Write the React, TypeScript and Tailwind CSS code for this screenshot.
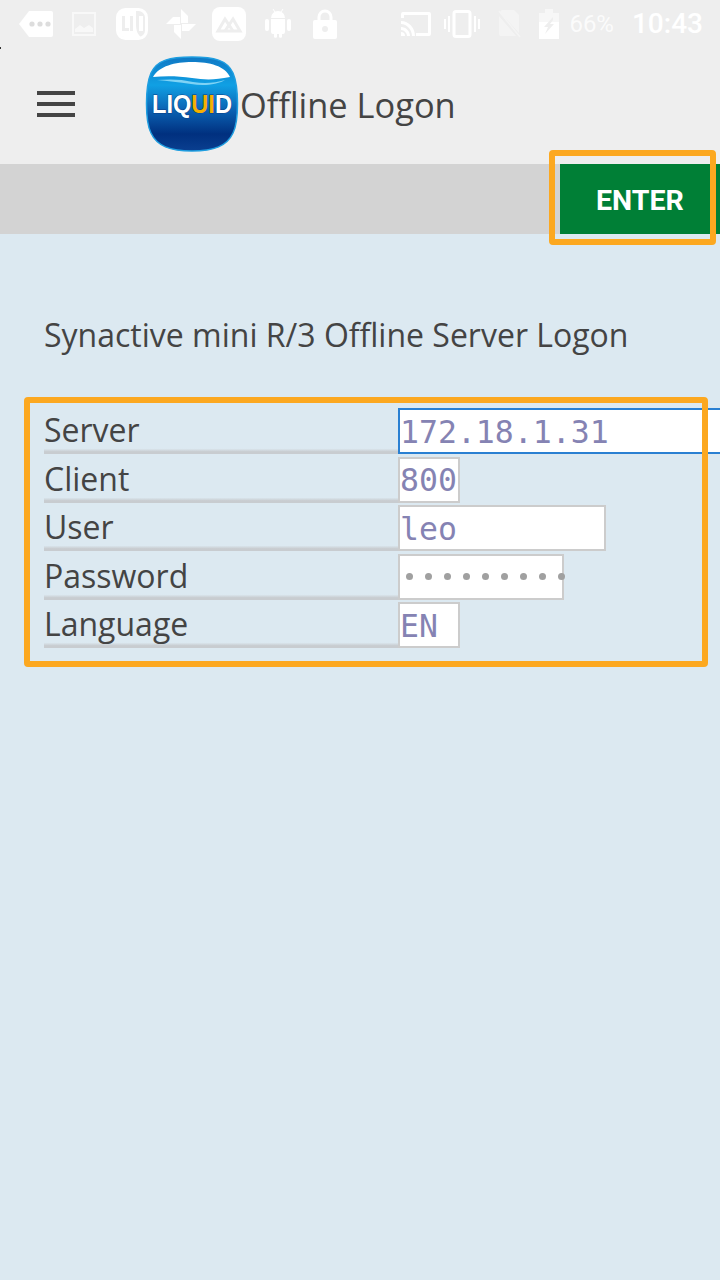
const W = "#ffffff";
const G = "#eeeeee";

function TagIcon() {
  return (
    <svg width="34" height="26" viewBox="0 0 34 26" className="ml-[19px]">
      <path d="M10 0h22a2 2 0 0 1 2 2v22a2 2 0 0 1-2 2H10L0 13z" fill={W} />
      <circle cx="13" cy="13" r="2.600" fill="#dddddd" />
      <circle cx="21" cy="13" r="2.600" fill="#dddddd" />
      <circle cx="29" cy="13" r="2.600" fill="#dddddd" />
    </svg>
  );
}
function ImageIcon() {
  return (
    <svg width="24" height="24" viewBox="0 0 24 24" className="ml-[19px]" opacity="0.6">
      <rect x="1" y="1" width="22" height="22" fill="none" stroke={W} strokeWidth="2" />
      <path d="M3 20v-3l5-4 4 3 5-3 4 3v4z" fill={W} />
    </svg>
  );
}
function LuiIcon() {
  return (
    <svg width="32" height="32" viewBox="0 0 32 32" className="ml-[20px]">
      <rect x="1.500" y="1.500" width="29" height="29" rx="8" fill="none" stroke={W} strokeWidth="3" />
      <path d="M3 6a3 3 0 0 1 3-3h14v13c0 7 2 11 5 13H8a5 5 0 0 1-5-5z" fill={W} />
      <path d="M6 8h3v12h4v3H6zM14 8h3v15h-3z" fill={G} />
      <path d="M23 8h4v15h-4z" fill={W} />
    </svg>
  );
}
function PinwheelIcon() {
  return (
    <svg width="30" height="30" viewBox="0 0 30 30" className="ml-[18px]">
      <path d="M15 14V0l7 7v7zM16 15h14l-7 7h-7zM15 16v14l-7-7v-7zM14 15H0l7-7h7z" fill={W} />
    </svg>
  );
}
function MountainIcon() {
  return (
    <svg width="34" height="34" viewBox="0 0 34 34" className="ml-[16px]">
      <rect width="34" height="34" rx="8" fill={W} />
      <path d="M6 24l7-12 4 6 4-6 7 12z" fill="none" stroke={G} strokeWidth="3" />
      <path d="M13 24l4-6 4 6" fill="none" stroke={G} strokeWidth="3" />
    </svg>
  );
}
function AndroidIcon() {
  return (
    <svg width="26" height="30" viewBox="0 0 26 30" className="ml-[19px]">
      <path d="M6 9a7 7 0 0 1 14 0zM6 10h14v13a2 2 0 0 1-2 2h-1v3a2 2 0 0 1-3 0v-3h-2v3a2 2 0 0 1-3 0v-3H8a2 2 0 0 1-2-2z" fill={W} />
      <path d="M8 0l2 3M18 0l-2 3" stroke={W} strokeWidth="1" />
      <rect x="0" y="10" width="4" height="12" rx="2" fill={W} />
      <rect x="22" y="10" width="4" height="12" rx="2" fill={W} />
    </svg>
  );
}
function LockIcon() {
  return (
    <svg width="24" height="30" viewBox="0 0 24 30" className="ml-[22px]">
      <path d="M6 12V8a6 6 0 0 1 12 0v4" fill="none" stroke={W} strokeWidth="3" />
      <rect x="0" y="11" width="24" height="19" rx="2" fill={W} />
      <circle cx="12" cy="20" r="3" fill={G} />
    </svg>
  );
}
function CastIcon() {
  return (
    <svg width="32" height="26" viewBox="0 0 32 26">
      <path d="M1 7V3a2 2 0 0 1 2-2h26a2 2 0 0 1 2 2v20a2 2 0 0 1-2 2H16v-3h12V4H4v3z" fill={W} />
      <path d="M1 10c8 0 14 7 14 15h-3c0-6-5-12-11-12zM1 16c5 0 9 4 9 9H7c0-3-3-6-6-6z" fill={W} />
      <path d="M1 21a4 4 0 0 1 4 4H1z" fill={W} />
    </svg>
  );
}
function VibrateIcon() {
  return (
    <svg width="36" height="28" viewBox="0 0 36 28" className="ml-[12px]">
      <rect x="10" y="1.500" width="16" height="25" rx="2" fill="none" stroke={W} strokeWidth="3" />
      <path d="M0 9h2v10H0zM4 6h2v16H4zM30 6h2v16h-2zM34 9h2v10h-2z" fill={W} />
    </svg>
  );
}
function NoSimIcon() {
  return (
    <svg width="23" height="28" viewBox="0 0 23 28" className="ml-[18px]" opacity="0.4">
      <path d="M4 0h12l5 5v18L3 3a2 2 0 0 1 1-3zM1 6l17 20H3a2 2 0 0 1-2-2z" fill={W} />
      <path d="M1 1l21 26" stroke={W} strokeWidth="1.500" />
    </svg>
  );
}
function BatteryIcon() {
  return (
    <svg width="20" height="30" viewBox="0 0 20 30" className="ml-[18px]">
      <path d="M0 4h6V0h8v4h6v9H0z" fill={W} opacity="0.5" />
      <path d="M0 13h20v17H0z" fill={W} />
      <path d="M14 8l-9 10h4l-3 7 9-10h-4l3-4z" fill={G} />
    </svg>
  );
}

function StatusBar() {
  return (
    <div className="flex h-[48px] items-center font-['Roboto',sans-serif] text-white">
      <TagIcon />
      <ImageIcon />
      <LuiIcon />
      <PinwheelIcon />
      <MountainIcon />
      <AndroidIcon />
      <LockIcon />
      <div className="ml-auto flex items-center pr-[17px]">
        <CastIcon />
        <VibrateIcon />
        <NoSimIcon />
        <BatteryIcon />
        <span className="ml-[10px] text-[24px] leading-none opacity-80">66%</span>
        <span className="ml-[18px] text-[28px] font-medium leading-none">10:43</span>
      </div>
    </div>
  );
}

function Logo() {
  return (
    <svg width="95" height="96" viewBox="0 0 95 96" className="shrink-0">
      <defs>
        <linearGradient id="logoBody" x1="0" y1="0" x2="0" y2="1">
          <stop offset="0" stopColor="#0f78c4" />
          <stop offset="0.3" stopColor="#10a0e4" />
          <stop offset="0.58" stopColor="#0a5fb0" />
          <stop offset="0.82" stopColor="#00307f" />
          <stop offset="1" stopColor="#0a3f90" />
        </linearGradient>
      </defs>
      <path d="M47 1c22 0 35 3 41 16 6 14 6 48 0 60-6 13-19 18-41 18S12 90 6 77C0 65 0 31 6 17 12 4 25 1 47 1z" fill="url(#logoBody)" stroke="#1f9ee0" strokeWidth="1.500" />
      <path d="M8 21C14 10 30 6 47 6c18 0 33 4 38 15-15 3-25 3-38 1C33 20 20 20 8 21z" fill="#ffffff" />
      <path d="M12 24c12-1 24-1 36 2 12 2 22 1 32-2-8 5-22 6-34 4-12-2-24-3-34-4z" fill="#7fd3f5" />
      <text x="47" y="57" textAnchor="middle" textLength="80" lengthAdjust="spacingAndGlyphs" fontFamily="'Liberation Sans',sans-serif" fontWeight="700" fontSize="25" fill="#ffffff" stroke="#0b3f86" strokeWidth="1" paintOrder="stroke">
        LIQ<tspan fill="#f5b000">UI</tspan>D
      </text>
    </svg>
  );
}

function MenuIcon() {
  return (
    <div className="flex w-[38px] flex-col gap-[7px]">
      <div className="h-[4px] bg-[#444444]" />
      <div className="h-[4px] bg-[#444444]" />
      <div className="h-[4px] bg-[#444444]" />
    </div>
  );
}

function Field({ label, children }: { label: string; children: React.ReactNode }) {
  return (
    <div className="flex h-[46px]">
      <div className="flex h-full w-[354px] shrink-0 items-end bg-gradient-to-b from-transparent from-[88%] to-[#c8ccd0] to-[95%] pb-[4px] text-[32px] leading-[40px] text-[#444444]">
        {label}
      </div>
      {children}
    </div>
  );
}

const boxClass =
  "flex h-full shrink-0 items-center border-2 border-[#cccccc] bg-white font-['DejaVu_Sans_Mono',monospace] text-[31.500px] leading-none text-[#8583b3]";

export default function App() {
  return (
    <div className="relative h-[1280px] w-[720px] overflow-hidden bg-[#dce9f1] font-['Open_Sans',sans-serif]">
      <header className="h-[164px] bg-[#eeeeee]">
        <StatusBar />
        <div className="flex h-[116px] items-start">
          <div className="ml-[37px] mt-[43px]">
            <MenuIcon />
          </div>
          <div className="ml-[70px] mt-[8px]">
            <Logo />
          </div>
          <h1 className="mt-[35px] text-[34.400px] font-normal leading-[44px] text-[#444444]">Offline Logon</h1>
        </div>
      </header>

      <div className="flex h-[70px] justify-end bg-[#d3d3d3]">
        <button className="flex w-[160px] items-center bg-[#007f36] pl-[36px] pt-[4px] font-['Roboto',sans-serif] text-[28.500px] font-bold text-white">
          ENTER
        </button>
      </div>

      <main className="pl-[44px] pt-[79px]">
        <p className="text-[32px] leading-[44px] text-[#444444]">Synactive mini R/3 Offline Server Logon</p>
        <div className="mt-[51px] flex flex-col gap-[2.500px]">
          <Field label="Server">
            <div className={boxClass + " w-[340px] pt-[3px] !border-[#2a80d2]"}>172.18.1.31</div>
          </Field>
          <Field label="Client">
            <div className={boxClass + " w-[62px] pt-[3px]"}>800</div>
          </Field>
          <Field label="User">
            <div className={boxClass + " w-[208px] pt-[3px]"}>leo</div>
          </Field>
          <Field label="Password">
            <div className={boxClass + " w-[166px] gap-[12px] pl-[6px]"}>
              {[0, 1, 2, 3, 4, 5, 6, 7, 8].map((i) => (
                <span key={i} className="h-[7px] w-[7px] shrink-0 rounded-full bg-[#a0a0a0]" />
              ))}
            </div>
          </Field>
          <Field label="Language">
            <div className={boxClass + " w-[62px] pt-[3px]"}>EN</div>
          </Field>
        </div>
      </main>

      <div className="absolute left-0 top-[47px] h-[2px] w-[1px] bg-[#333333]" />
      <div className="absolute left-[549px] top-[150px] h-[95px] w-[167px] rounded-[4px] border-[6px] border-[#fca820]" />
      <div className="absolute left-[24px] top-[397px] h-[270px] w-[684px] rounded-[4px] border-[6px] border-[#fca820]" />
    </div>
  );
}
